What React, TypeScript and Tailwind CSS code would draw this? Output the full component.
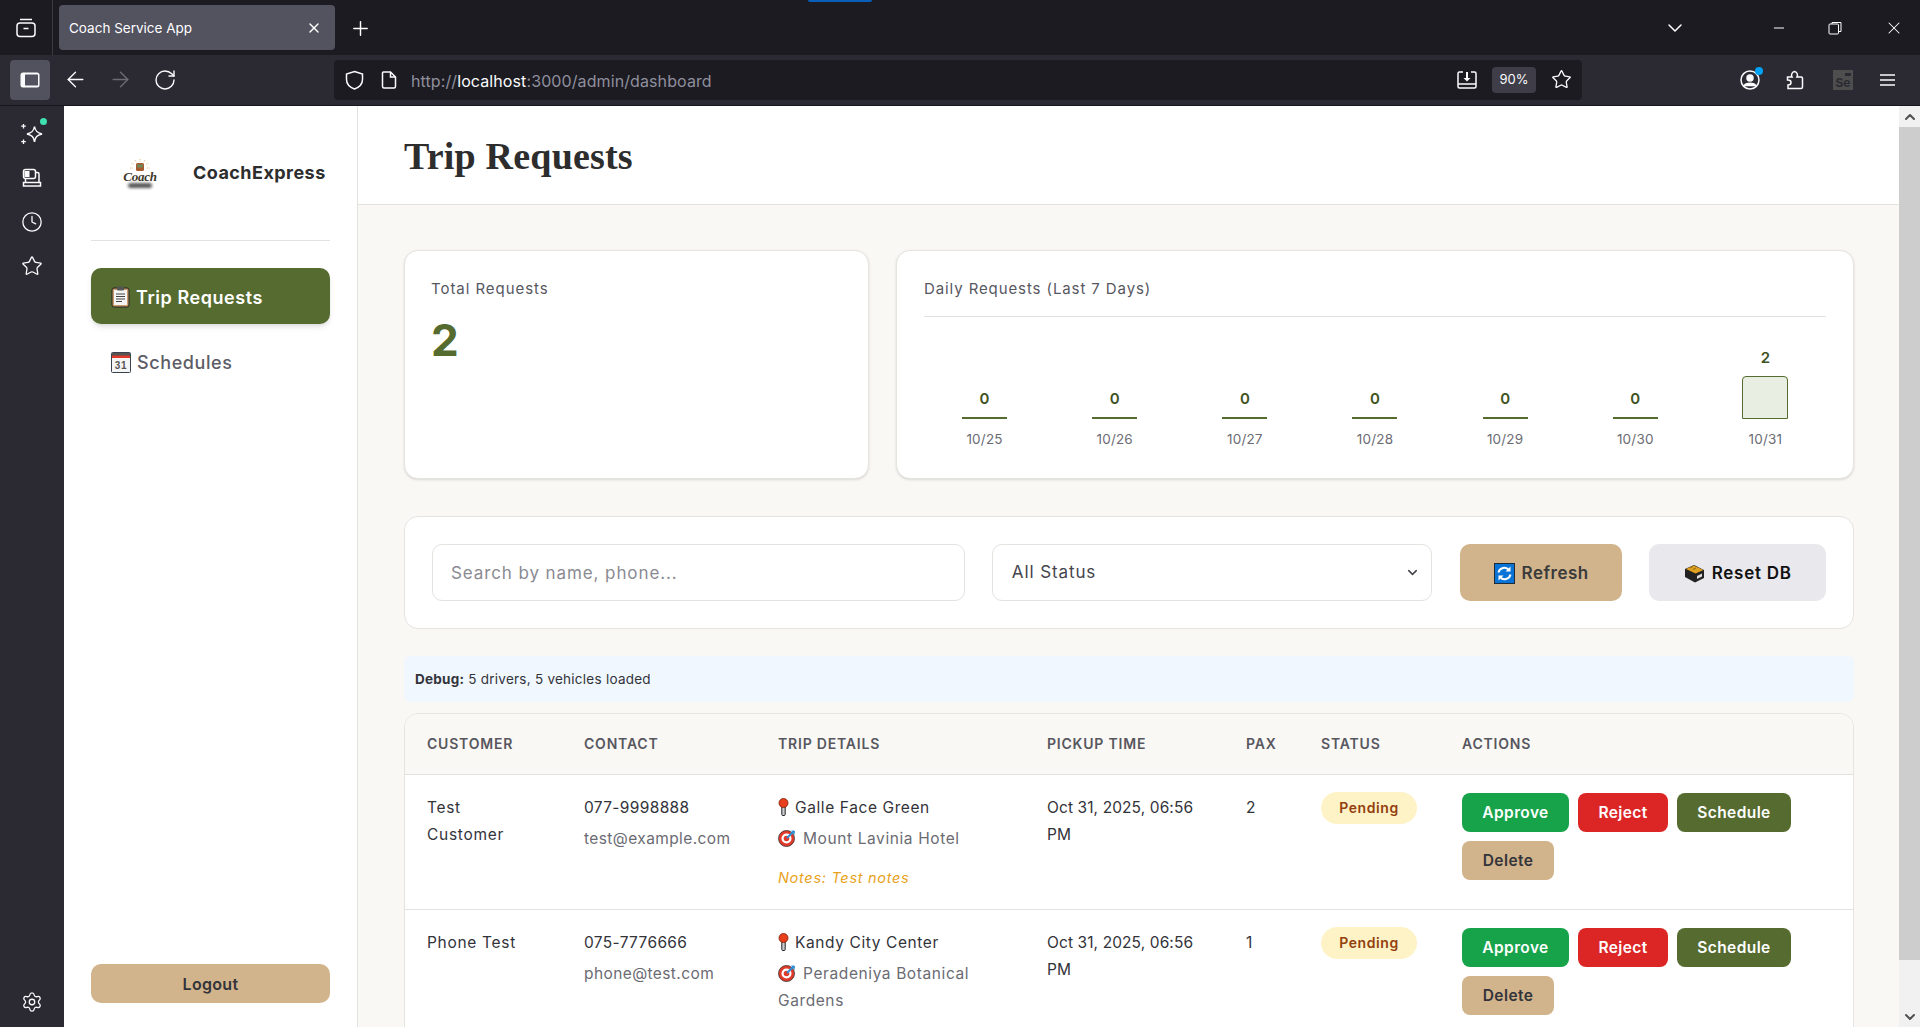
import { ArrowLeft, ArrowRight, ChevronDown, ChevronUp, Clock, Minus, Plus, RotateCw, Settings, Star, X } from 'lucide-react'

const DAYS = [
  { label: '10/25', count: 0 },
  { label: '10/26', count: 0 },
  { label: '10/27', count: 0 },
  { label: '10/28', count: 0 },
  { label: '10/29', count: 0 },
  { label: '10/30', count: 0 },
  { label: '10/31', count: 2 },
]

const ROWS = [
  {
    name: 'Test Customer',
    phone: '077-9998888',
    email: 'test@example.com',
    from: 'Galle Face Green',
    to: 'Mount Lavinia Hotel',
    notes: 'Notes: Test notes',
    pickup: 'Oct 31, 2025, 06:56 PM',
    pax: 2,
  },
  {
    name: 'Phone Test',
    phone: '075-7776666',
    email: 'phone@test.com',
    from: 'Kandy City Center',
    to: 'Peradeniya Botanical Gardens',
    notes: '',
    pickup: 'Oct 31, 2025, 06:56 PM',
    pax: 1,
  },
]

const COLUMNS = [
  { title: 'Customer', width: 'w-[157px]' },
  { title: 'Contact', width: 'w-[194px]' },
  { title: 'Trip Details', width: 'w-[269px]' },
  { title: 'Pickup Time', width: 'w-[199px]' },
  { title: 'Pax', width: 'w-[75px]' },
  { title: 'Status', width: 'w-[141px]' },
  { title: 'Actions', width: '' },
]

function ClipboardEmoji() {
  return (
    <svg width="19" height="22" viewBox="0 0 19 22" className="shrink-0">
      <rect x="1" y="2" width="17" height="19" rx="2" fill="#c89a6c" stroke="#222" strokeWidth="1" />
      <rect x="3" y="4" width="13" height="15" fill="#f4f4f4" />
      <rect x="6" y="0.5" width="7" height="4" rx="1" fill="#555" />
      <path d="M5 8h9M5 10.5h9M5 13h9M5 15.5h6" stroke="#444" strokeWidth="1" />
    </svg>
  )
}

function CalendarEmoji() {
  return (
    <svg width="20" height="21" viewBox="0 0 20 21" className="shrink-0">
      <rect x="0.5" y="0.5" width="19" height="20" rx="1" fill="#f5f5f5" stroke="#39424d" />
      <rect x="1" y="1" width="18" height="3" fill="#555" />
      <rect x="1" y="3.5" width="18" height="2.5" fill="#e0392b" />
      <text x="10" y="17" textAnchor="middle" fontSize="10" fontWeight="700" fontFamily="Liberation Sans, sans-serif" fill="#555">
        31
      </text>
    </svg>
  )
}

function RefreshEmoji() {
  return (
    <svg width="21" height="21" viewBox="0 0 21 21" className="shrink-0">
      <rect x="0.5" y="0.5" width="20" height="20" fill="#0a74d6" stroke="#1d2a38" />
      <path d="M4.5 9.5a6 6 0 0 1 10.5-2.5M16.5 11.5a6 6 0 0 1-10.5 2.5" fill="none" stroke="#fff" strokeWidth="2" />
      <path d="M16.5 3.5v5h-5zM4.5 17.5v-5h5z" fill="#fff" />
    </svg>
  )
}

function BoxEmoji() {
  return (
    <svg width="21" height="19" viewBox="0 0 21 19" className="shrink-0">
      <path d="M10 1l10 5v8l-9 4.5L1 13V5z" fill="#222" />
      <path d="M9.5 1.5L19.5 6l-8 3.5L2 5z" fill="#e0a020" />
      <path d="M6 4l3-1.5M9 5.5l3-1.5" stroke="#8a6a10" strokeWidth="1" />
      <path d="M13 12l5-2.500v3l-5 2.500z" fill="#ddd" />
    </svg>
  )
}

function PinEmoji() {
  return (
    <svg width="11" height="18" viewBox="0 0 11 18" className="shrink-0">
      <rect x="3.800" y="7" width="3.400" height="10.500" rx="1" fill="#c9ccd0" stroke="#222" strokeWidth="1" />
      <circle cx="5.500" cy="5" r="4.500" fill="#e8401c" stroke="#7a1a08" strokeWidth="0.800" />
    </svg>
  )
}

function TargetEmoji() {
  return (
    <svg width="18" height="18" viewBox="0 0 18 18" className="shrink-0">
      <circle cx="8.500" cy="9.500" r="8" fill="#e23a2a" stroke="#333" strokeWidth="0.800" />
      <circle cx="8.500" cy="9.500" r="5" fill="#fff" />
      <circle cx="8.500" cy="9.500" r="2.800" fill="#e23a2a" />
      <path d="M9 9l7-7" stroke="#2f8fd8" strokeWidth="2" />
      <path d="M13 1.500l4 .5-.5 4z" fill="#2f8fd8" />
    </svg>
  )
}

function CoachLogo() {
  return (
    <div className="flex flex-col items-center w-[34px]">
      <svg width="20" height="12" viewBox="0 0 20 12">
        <path
          d="M10 0v3M5 1l1.500 2.500M15 1l-1.500 2.500M1.500 4l2.500 1.500M18.500 4L16 5.500M0 9h3M17 9h3"
          stroke="#e8c48a"
          strokeWidth="1"
          strokeDasharray="1 0.600"
        />
        <rect x="6" y="4" width="8" height="8" rx="1.500" fill="#a65a2e" />
        <rect x="7.200" y="5.500" width="5.600" height="3" fill="#6f8a5a" />
      </svg>
      <span className="font-['Liberation_Serif',serif] italic font-bold text-[13px] leading-[11px] tracking-[-0.2px] text-[#40382a]">
        Coach
      </span>
      <div className="w-[24px] h-[5px] mt-[1px] rounded-full bg-[#555] blur-[1.500px]" />
    </div>
  )
}

function BrowserTopBar() {
  return (
    <div className="relative h-[55px] shrink-0 bg-[#1c1b22] flex items-center text-white">
      <div className="absolute left-[808px] top-0 w-[64px] h-[2px] rounded-b bg-[#0a5fb8]" />
      <div className="w-[53px] h-full border-r border-[#3c3b44] flex items-center justify-center">
        <svg width="20" height="20" viewBox="0 0 20 20" fill="none" stroke="#fbfbfe" strokeWidth="1.500">
          <rect x="1" y="5" width="18" height="13.500" rx="3" />
          <path d="M4 1.500h12M7.500 10.500h5" />
        </svg>
      </div>
      <div className="ml-[6px] w-[276px] h-[45px] rounded-[4px] bg-[#53525f] pl-[10px] pr-[13px] flex items-center justify-between">
        <span className="text-[13.500px] pt-[1px]">Coach Service App</span>
        <X size={16} strokeWidth={2} />
      </div>
      <Plus size={23} className="ml-[14px] mt-[1px]" strokeWidth={1.500} />
      <div className="ml-auto flex items-center mt-[1px]">
        <ChevronDown size={24} strokeWidth={1.500} className="mr-[84px]" />
        <Minus size={16} strokeWidth={1.500} className="mr-[41px]" />
        <svg width="14" height="14" viewBox="0 0 14 14" fill="none" stroke="#fff" className="mr-[42px]">
          <rect x="1" y="3" width="9.500" height="10" rx="1" />
          <path d="M4 3V1.500h9v9h-2.500" />
        </svg>
        <X size={20} strokeWidth={1.250} className="mr-[16px]" />
      </div>
    </div>
  )
}

function BrowserToolbar() {
  return (
    <div className="h-[51px] shrink-0 bg-[#2b2a33] border-b border-[#17161c] flex items-center text-[#fbfbfe] pb-[1px]">
      <div className="ml-[10px] w-[40px] h-[40px] rounded-[4px] bg-[#52525e] flex items-center justify-center">
        <svg width="20" height="16" viewBox="0 0 20 16">
          <rect x="0.500" y="0.500" width="19" height="15" rx="2.500" fill="#fbfbfe" />
          <rect x="5" y="2.500" width="13" height="11" rx="0.500" fill="#52525e" />
        </svg>
      </div>
      <ArrowLeft size={25} className="ml-[13px]" strokeWidth={1.300} />
      <ArrowRight size={25} className="ml-[20px] text-[#6d6c75]" strokeWidth={1.300} />
      <RotateCw size={24} className="ml-[20px]" strokeWidth={1.400} />
      <div className="ml-[157px] w-[1248px] h-[40px] rounded-[4px] bg-[#1c1b22] flex items-center">
        <svg width="19" height="20" viewBox="0 0 19 20" fill="none" stroke="#fbfbfe" strokeWidth="1.500" className="ml-[11px]">
          <path d="M9.500 1.500l8 2.500v5.500c0 5-4 8-8 9.500-4-1.500-8-4.500-8-9.500V4z" />
        </svg>
        <svg width="16" height="18" viewBox="0 0 16 18" fill="none" stroke="#fbfbfe" strokeWidth="1.500" className="ml-[17px]">
          <path d="M2.500 1h7l5 5v9.500a1.500 1.500 0 0 1-1.500 1.500H3a1.500 1.500 0 0 1-1.500-1.500V2A1 1 0 0 1 2.500 1zM9.500 1v5h5" />
        </svg>
        <span className="ml-[14px] pt-[2px] text-[16px] tracking-[0.1px] text-[#8f8f9d]">
          http://<span className="text-[#fbfbfe]">localhost</span>:3000/admin/dashboard
        </span>
        <div className="ml-auto flex items-center">
          <svg width="20" height="20" viewBox="0 0 20 20" fill="none" stroke="#fbfbfe" strokeWidth="1.500">
            <path d="M6 2H2.500A1.500 1.500 0 0 0 1 3.500v13A1.500 1.500 0 0 0 2.500 18h15a1.500 1.500 0 0 0 1.500-1.500v-13A1.500 1.500 0 0 0 17.500 2H14M1 14h18" />
            <path d="M10 2v8" strokeWidth="2" />
            <path d="M6.500 8h7L10 11.500z" fill="#fbfbfe" stroke="none" />
          </svg>
          <div className="ml-[15px] w-[44px] h-[26px] rounded-[4px] bg-[#3e3d48] flex items-center justify-center text-[13px]">
            90%
          </div>
          <Star size={21} strokeWidth={1.500} className="ml-[15px] mr-[10px]" />
        </div>
      </div>
      <div className="relative ml-[158px]">
        <svg width="20" height="20" viewBox="0 0 20 20" fill="none" stroke="#fbfbfe" strokeWidth="1.500">
          <circle cx="10" cy="10" r="9" />
          <circle cx="10" cy="8" r="3" fill="#fbfbfe" />
          <path d="M4.500 15.500c1-3 10-3 11 0z" fill="#fbfbfe" />
        </svg>
        <div className="absolute -top-[3px] -right-[3px] w-[8px] h-[8px] rounded-full bg-[#00a2f5]" />
      </div>
      <svg width="18" height="20" viewBox="0 0 18 20" fill="none" stroke="#fbfbfe" strokeWidth="1.500" className="ml-[26px]">
        <path d="M1.500 7h4.500c-1-1.500-.5-5 2.500-5.500 3 .5 3.500 4 2.500 5.500h4.500a1.500 1.500 0 0 1 1 1.500V17a1.500 1.500 0 0 1-1.500 1.500H2V15c2 0 3-1 3-2.500S4 10 2 10H1.500z" />
      </svg>
      <div className="relative ml-[29px] w-[20px] h-[20px] bg-[#4e4e4e] text-[#2b2a33] text-[12px] font-bold leading-[26px] text-center">
        Se
        <div className="absolute top-[3px] right-[2px] w-[6px] h-[3px] bg-[#2b2a33]" />
      </div>
      <svg width="15" height="12" viewBox="0 0 15 12" stroke="#fbfbfe" strokeWidth="1.500" className="ml-[27px]">
        <path d="M0 1h15M0 6h15M0 11h15" />
      </svg>
    </div>
  )
}

function BrowserRail() {
  return (
    <div className="w-[64px] shrink-0 bg-[#2b2a33] flex flex-col items-center text-[#fbfbfe] pt-[17px] pb-[14px]">
      <div className="relative h-[21px] w-[24px]">
        <svg width="24" height="24" viewBox="0 0 24 24" fill="none" stroke="#fbfbfe" strokeWidth="1.500" className="-mt-[1px]">
          <path d="M14.500 4.500c.7 4.500 2.500 6.300 7.500 7.500-5 1.200-6.800 3-7.500 8-.7-5-2.500-6.800-7.500-8 5-1.200 6.800-3 7.500-7.500z" />
          <path d="M3.500 2v4.500M1.200 4.200h4.600M3.500 17.500V22M1.200 19.700h4.600" strokeWidth="1.300" />
        </svg>
        <div className="absolute -top-[5px] -right-[3px] w-[7px] h-[7px] rounded-full bg-[#3fe1b0]" />
      </div>
      <svg width="20" height="20" viewBox="0 0 20 20" fill="none" stroke="#fbfbfe" strokeWidth="1.500" className="mt-[24px]">
        <rect x="1.500" y="1.500" width="12" height="9" rx="2" />
        <path d="M14 4.500h1.500a1.500 1.500 0 0 1 1.500 1.500v8M3.500 10.500V14M1.500 14.500h17V18h-17z" />
        <rect x="2.500" y="3" width="5" height="6" fill="#fbfbfe" stroke="none" />
      </svg>
      <Clock size={22} strokeWidth={1.400} className="mt-[23px]" />
      <Star size={22} strokeWidth={1.400} className="mt-[22px]" />
      <Settings size={22} strokeWidth={1.400} className="mt-auto" />
    </div>
  )
}

function Sidebar() {
  return (
    <aside className="w-[294px] shrink-0 bg-white border-r border-[#e2e2de] flex flex-col px-[27px] pb-[24px]">
      <div className="h-[135px] shrink-0 border-b border-[#e2e2de] flex items-center pb-[2px]">
        <div className="ml-[32px] mt-[2px]">
          <CoachLogo />
        </div>
        <span className="ml-[36px] text-[18px] font-bold text-[#2d2d2d] tracking-[0.45px]">CoachExpress</span>
      </div>
      <div className="mt-[27px] h-[56px] rounded-[10px] bg-[#556b2f] shadow-md flex items-center pl-[20px] pt-[2px] gap-[6px] text-white text-[18px] font-semibold tracking-[0.55px]">
        <ClipboardEmoji />
        Trip Requests
      </div>
      <div className="mt-[10px] h-[56px] flex items-center pl-[20px] gap-[6px] text-[#5c5c66] text-[18px] font-medium tracking-[0.6px]">
        <CalendarEmoji />
        Schedules
      </div>
      <button className="mt-auto h-[39px] rounded-[10px] bg-[#d2b48c] text-[#33333a] text-[16px] font-semibold tracking-[0.3px]">
        Logout
      </button>
    </aside>
  )
}

function StatsRow() {
  return (
    <div className="flex gap-[27px]">
      <div className="w-[465px] h-[229px] shrink-0 rounded-[14px] bg-white border border-[#e5e4df] shadow-sm px-[26px] pt-[27px]">
        <p className="text-[15px] leading-[22px] text-[#57575f] tracking-[0.95px]">Total Requests</p>
        <p className="mt-[13px] text-[44px] leading-[54px] font-bold tracking-[1px] text-[#556b2f]">2</p>
      </div>
      <div className="flex-1 h-[229px] rounded-[14px] bg-white border border-[#e5e4df] shadow-sm px-[27px] pt-[27px]">
        <p className="h-[39px] text-[15px] leading-[22px] text-[#57575f] tracking-[0.9px] border-b border-[#e2e2de]">
          Daily Requests (Last 7 Days)
        </p>
        <div className="grid grid-cols-7 gap-[9px] h-[102px] items-end">
          {DAYS.map((day) => (
            <div key={day.label} className="flex flex-col items-center">
              <span className="text-[15px] leading-[22px] font-semibold text-[#3f5222] mb-[7px]">{day.count}</span>
              {day.count > 0 ? (
                <div className="w-[46px] h-[43px] rounded-t-[4px] bg-[#e9eee2] border border-[#556b2f]" />
              ) : (
                <div className="w-[45px] h-[2px] bg-[#556b2f]" />
              )}
            </div>
          ))}
        </div>
        <div className="grid grid-cols-7 gap-[9px] mt-[11px]">
          {DAYS.map((day) => (
            <span key={day.label} className="text-center text-[13.500px] leading-[18px] tracking-[0.2px] text-[#6b6b73]">
              {day.label}
            </span>
          ))}
        </div>
      </div>
    </div>
  )
}

function FilterBar() {
  return (
    <div className="mt-[37px] h-[113px] rounded-[14px] bg-white border border-[#e5e4df] px-[27px] flex items-center">
      <input
        placeholder="Search by name, phone..."
        className="w-[534px] h-[57px] rounded-[10px] border border-[#e2e2de] px-[18px] text-[17px] tracking-[0.9px] placeholder:text-[#8a8a92]"
      />
      <div className="ml-[27px] w-[441px] h-[57px] rounded-[10px] border border-[#e2e2de] pl-[19px] pr-[11px] flex items-center justify-between text-[17px] tracking-[0.9px] text-[#45454d]">
        All Status
        <ChevronDown size={15} strokeWidth={2.500} />
      </div>
      <button className="ml-[28px] w-[163px] h-[57px] rounded-[10px] bg-[#d2b48c] text-[#3a3a3a] text-[17px] font-semibold tracking-[0.5px] pt-[2px] flex items-center justify-center gap-[7px]">
        <RefreshEmoji />
        Refresh
      </button>
      <button className="ml-[27px] w-[177px] h-[57px] rounded-[10px] bg-[#e8e8ed] text-[#111] text-[17px] font-semibold tracking-[0.75px] pt-[2px] flex items-center justify-center gap-[7px]">
        <BoxEmoji />
        Reset DB
      </button>
    </div>
  )
}

function RequestRow({ row }: { row: (typeof ROWS)[number] }) {
  return (
    <tr className="h-[135px] border-t border-[#e2e2de] align-top text-[15.500px] leading-[27px] text-[#33333a]">
      <td className="pl-[22px] pt-[19px] pb-[20px] tracking-[0.7px]">
        <div className="w-[96px]">{row.name}</div>
      </td>
      <td className="pl-[22px] pt-[19px]">
        <div className="tracking-[0.35px]">{row.phone}</div>
        <div className="mt-[4px] text-[#6b6b73] tracking-[0.4px]">{row.email}</div>
      </td>
      <td className="pl-[22px] pr-[10px] pt-[19px] tracking-[0.6px]">
        <div className="flex items-center gap-[6px]">
          <PinEmoji />
          {row.from}
        </div>
        <div className="mt-[4px] text-[#6b6b73]">
          <TargetEmoji2 />
          {row.to}
        </div>
        {row.notes && <div className="mt-[12px] text-[14.500px] italic tracking-[0.7px] text-[#e9a21d]">{row.notes}</div>}
      </td>
      <td className="pl-[22px] pr-[20px] pt-[19px] tracking-[0.1px]">{row.pickup}</td>
      <td className="pl-[22px] pt-[19px]">{row.pax}</td>
      <td className="pl-[22px] pt-[17px]">
        <span className="inline-flex w-[96px] h-[32px] items-center justify-center rounded-full bg-[#fef3c7] text-[#92400e] text-[14px] font-semibold tracking-[0.6px]">
          Pending
        </span>
      </td>
      <td className="pl-[22px] pt-[18px] pb-[20px]">
        <div className="flex flex-wrap gap-x-[9px] gap-y-[9px] w-[340px] text-[15.500px] font-semibold leading-[39px] tracking-[0.4px]">
          <button className="w-[107px] h-[39px] rounded-[8px] bg-[#16a34a] text-white">Approve</button>
          <button className="w-[90px] h-[39px] rounded-[8px] bg-[#dc2626] text-white">Reject</button>
          <button className="w-[114px] h-[39px] rounded-[8px] bg-[#556b2f] text-white">Schedule</button>
          <button className="w-[92px] h-[39px] rounded-[8px] bg-[#d2b48c] text-[#33333a]">Delete</button>
        </div>
      </td>
    </tr>
  )
}

function TargetEmoji2() {
  return (
    <span className="inline-block align-[-3px] mr-[7px]">
      <TargetEmoji />
    </span>
  )
}

function RequestsTable() {
  return (
    <div className="mt-[11px] rounded-[14px] border border-[#e5e4df] bg-white overflow-hidden">
      <table className="w-full table-fixed border-collapse">
        <thead className="bg-[#faf8f4]">
          <tr className="h-[60px]">
            {COLUMNS.map((col) => (
              <th
                key={col.title}
                className={`${col.width} pl-[22px] text-left text-[14px] font-semibold uppercase tracking-[0.8px] text-[#57575f]`}
              >
                {col.title}
              </th>
            ))}
          </tr>
        </thead>
        <tbody>
          {ROWS.map((row) => (
            <RequestRow key={row.phone} row={row} />
          ))}
        </tbody>
      </table>
    </div>
  )
}

function Scrollbar() {
  return (
    <div className="w-[21px] shrink-0 bg-[#f1f1f1] flex flex-col justify-between items-center relative">
      <div className="w-full">
        <div className="h-[21px] flex items-center justify-center text-[#505050]">
          <ChevronUp size={16} strokeWidth={3} />
        </div>
        <div className="h-[833px] bg-[#cdcdcd]" />
      </div>
      <div className="h-[21px] flex items-center justify-center text-[#505050]">
        <ChevronDown size={16} strokeWidth={3} />
      </div>
    </div>
  )
}

export default function App() {
  return (
    <div className="w-[1920px] h-[1027px] overflow-hidden flex flex-col font-['Inter',sans-serif]">
      <BrowserTopBar />
      <BrowserToolbar />
      <div className="flex-1 min-h-0 flex">
        <BrowserRail />
        <Sidebar />
        <main className="flex-1 min-w-0 overflow-hidden bg-[#f9f8f4]">
          <header className="h-[99px] bg-white border-b border-[#e2e2de] pl-[46px] pt-[2px] flex items-center">
            <h1 className="font-['Liberation_Serif',serif] text-[38px] font-bold tracking-[0.2px] text-[#2d2d2d]">Trip Requests</h1>
          </header>
          <div className="pl-[46px] pr-[45px] pt-[45px]">
            <StatsRow />
            <FilterBar />
            <div className="mt-[27px] h-[46px] rounded-[6px] bg-[#f0f7ff] pl-[11px] flex items-center text-[13.500px] tracking-[0.25px] text-[#33333a]">
              <strong className="mr-[4px] font-bold">Debug:</strong>5 drivers, 5 vehicles loaded
            </div>
            <RequestsTable />
          </div>
        </main>
        <Scrollbar />
      </div>
    </div>
  )
}
